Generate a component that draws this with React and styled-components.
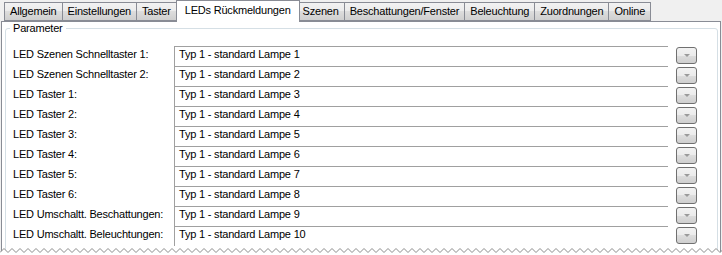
import React from "react";
import styled, { createGlobalStyle } from "styled-components";

const GlobalStyle = createGlobalStyle`
  body {
    margin: 0;
    background: #ffffff;
  }
`;

const Window = styled.div`
  position: relative;
  width: 722px;
  height: 255px;
  overflow: hidden;
  background: #f0f0f0;
  font-family: "Liberation Sans", Arial, sans-serif;
  font-size: 11px;
  letter-spacing: -0.2px;
  color: #000;
`;

const TabStrip = styled.div`
  display: flex;
  align-items: flex-end;
  height: 21px;
  padding-left: 4px;
`;

const Tab = styled.div`
  position: relative;
  box-sizing: border-box;
  height: ${(p) => (p.active ? "22px" : "19px")};
  margin: ${(p) => (p.active ? "0 -2px -1px -1px" : "0 0 0 -1px")};
  padding: ${(p) => (p.active ? "0 8px" : "0 5px")};
  border: 1px solid #898c95;
  border-bottom: ${(p) => (p.active ? "none" : "1px solid #898c95")};
  background: ${(p) =>
    p.active
      ? "#ffffff"
      : "linear-gradient(#f2f2f2, #ebebeb 50%, #dddddd 50%, #cfcfcf)"};
  z-index: ${(p) => (p.active ? 2 : 1)};
  line-height: ${(p) => (p.active ? "18px" : "16px")};
  white-space: nowrap;
  &:first-child {
    margin-left: 0;
  }
`;

const Panel = styled.div`
  box-sizing: border-box;
  margin: 0 1px;
  height: 240px;
  border: 1px solid #898c95;
  background: #ffffff;
`;

const GroupBox = styled.fieldset`
  margin: 0 2px 0 3px;
  padding: 0;
  border: 1px solid #d5dfe5;
  border-radius: 3px;
  height: 260px;
`;

const Legend = styled.legend`
  margin-left: 4px;
  padding: 0 3px;
  line-height: 13px;
`;

const Rows = styled.div`
  display: flex;
  flex-direction: column;
  padding: 11px 20px 0 7px;
`;

const Row = styled.div`
  display: grid;
  grid-template-columns: 161px 1fr 21px;
  height: 20px;
`;

const Label = styled.div`
  line-height: 14px;
  padding-top: 1px;
  white-space: nowrap;
`;

const ValueBox = styled.div`
  box-sizing: border-box;
  height: 20px;
  margin-right: 8px;
  border-top: 1px solid #a0a0a0;
  border-left: 1px solid #a0a0a0;
  padding-left: 4px;
  line-height: 14px;
`;

const DropButton = styled.div`
  box-sizing: border-box;
  margin-top: 1px;
  width: 21px;
  height: 17px;
  border: 1px solid #707070;
  border-radius: 3px;
  background: linear-gradient(#f2f2f2, #ebebeb 50%, #dddddd 50%, #cfcfcf);
  display: flex;
  align-items: center;
  justify-content: center;
`;

const Arrow = styled.span`
  width: 0;
  height: 0;
  border-left: 3px solid transparent;
  border-right: 3px solid transparent;
  border-top: 3px solid #9a9a9a;
`;

const TornEdge = styled.svg`
  position: absolute;
  left: 0;
  bottom: 0;
  display: block;
`;

const tabs = [
  "Allgemein",
  "Einstellungen",
  "Taster",
  "LEDs Rückmeldungen",
  "Szenen",
  "Beschattungen/Fenster",
  "Beleuchtung",
  "Zuordnungen",
  "Online",
];

const rows = [
  ["LED Szenen Schnelltaster 1:", "Typ 1 - standard Lampe 1"],
  ["LED Szenen Schnelltaster 2:", "Typ 1 - standard Lampe 2"],
  ["LED Taster 1:", "Typ 1 - standard Lampe 3"],
  ["LED Taster 2:", "Typ 1 - standard Lampe 4"],
  ["LED Taster 3:", "Typ 1 - standard Lampe 5"],
  ["LED Taster 4:", "Typ 1 - standard Lampe 6"],
  ["LED Taster 5:", "Typ 1 - standard Lampe 7"],
  ["LED Taster 6:", "Typ 1 - standard Lampe 8"],
  ["LED Umschaltt. Beschattungen:", "Typ 1 - standard Lampe 9"],
  ["LED Umschaltt. Beleuchtungen:", "Typ 1 - standard Lampe 10"],
];

const zigzag = () => {
  let pts = "";
  for (let x = 0; x <= 724; x += 4) {
    pts += `${x},${(x / 4) % 2 === 0 ? 5.5 : 1.5} `;
  }
  return pts.trim();
};

const App = () => {
  const pts = zigzag();
  return (
    <Window>
      <GlobalStyle />
      <TabStrip>
        {tabs.map((t) => (
          <Tab key={t} active={t === "LEDs Rückmeldungen"}>
            {t}
          </Tab>
        ))}
      </TabStrip>
      <Panel>
        <GroupBox>
          <Legend>Parameter</Legend>
          <Rows>
            {rows.map(([label, value]) => (
              <Row key={label}>
                <Label>{label}</Label>
                <ValueBox>{value}</ValueBox>
                <DropButton>
                  <Arrow />
                </DropButton>
              </Row>
            ))}
          </Rows>
        </GroupBox>
      </Panel>
      <TornEdge width="722" height="8" viewBox="0 0 722 8">
        <polygon points={`0,8 ${pts} 724,8`} fill="#ffffff" />
        <polyline points={pts} fill="none" stroke="#8c8c8c" strokeWidth="1" />
      </TornEdge>
    </Window>
  );
};

export default App;
